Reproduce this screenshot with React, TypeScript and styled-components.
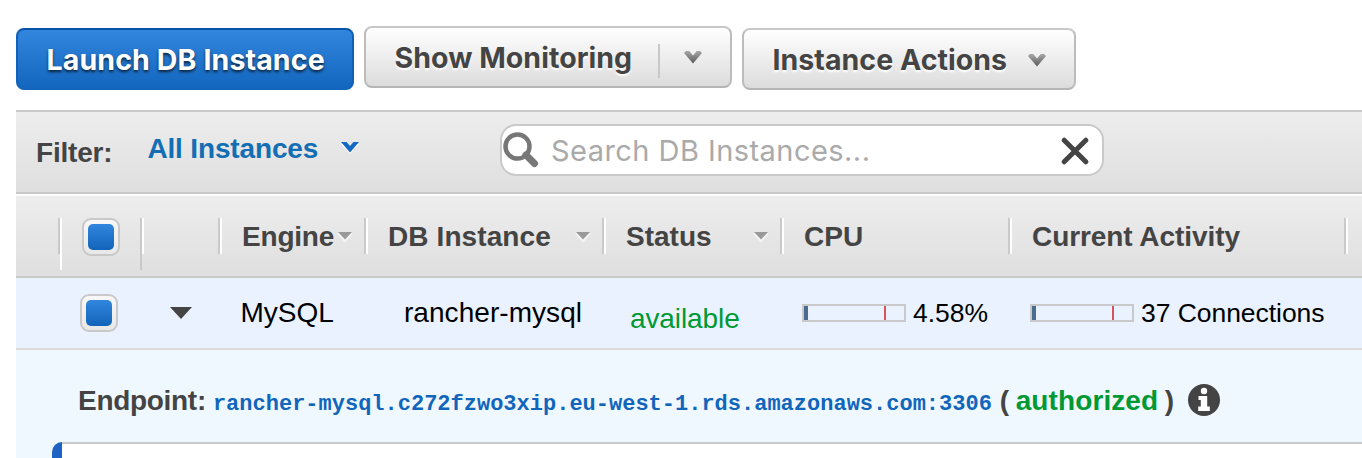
import React from "react";
import styled, { createGlobalStyle } from "styled-components";

const Global = createGlobalStyle`
  * { box-sizing: border-box; }
  body { margin: 0; background: #fff; overflow: hidden; }
`;

const Page = styled.div`
  width: 1362px;
  height: 458px;
  overflow: hidden;
  padding-left: 16px;
  font-family: "Liberation Sans", Arial, sans-serif;
  font-size: 28px;
  color: #444;
`;

const Toolbar = styled.div`
  display: flex;
  gap: 10px;
  height: 110px;
  padding-top: 26px;
`;

const Button = styled.div<{ $width: number; $primary?: boolean; $drop?: number }>`
  display: flex;
  align-items: center;
  width: ${(p) => p.$width}px;
  height: 62px;
  margin-top: ${(p) => p.$drop ?? 0}px;
  padding-left: 28.5px;
  border: 2px solid;
  border-color: ${(p) => (p.$primary ? "#0753a8 #1161b8 #1466bd" : "#c8c8c8 #bcbcbc #b5b5b5")};
  border-radius: 8px;
  background: ${(p) =>
    p.$primary ? "linear-gradient(#3286dd, #1366bd)" : "linear-gradient(#fff, #dcdcdc)"};
  color: ${(p) => (p.$primary ? "#fff" : "#444")};
  text-shadow: ${(p) => (p.$primary ? "0 2px 3px rgba(0,0,0,.7)" : "0 2px 2px #fff")};
`;

const Text = styled.span<{
  $size?: number;
  $bold?: boolean;
  $ui?: boolean;
  $track?: number;
  $color?: string;
  $left?: number;
  $down?: number;
}>`
  font-family: ${(p) => (p.$ui ? 'Inter, "Liberation Sans", sans-serif' : "inherit")};
  font-size: ${(p) => p.$size ?? 28}px;
  font-weight: ${(p) => (p.$bold ? 700 : 400)};
  letter-spacing: ${(p) => p.$track ?? 0}px;
  color: ${(p) => p.$color ?? "inherit"};
  margin-left: ${(p) => p.$left ?? 0}px;
  padding-top: ${(p) => Math.max(0, (p.$down ?? 0) * 2)}px;
  padding-bottom: ${(p) => Math.max(0, -(p.$down ?? 0) * 2)}px;
  line-height: 34px;
  white-space: pre;
`;

const ButtonRule = styled.span`
  width: 2px;
  height: 34px;
  margin: 8px 23px 0 auto;
  background: #c8c8c8;
`;

const ArrowSlot = styled.span<{ $right: number; $auto?: boolean; $top?: number }>`
  display: flex;
  margin-top: ${(p) => p.$top ?? 0}px;
  margin-right: ${(p) => p.$right}px;
  margin-left: ${(p) => (p.$auto ? "auto" : 0)};
`;

const FilterBar = styled.div`
  display: flex;
  align-items: center;
  height: 84px;
  border-top: 2px solid #c9c9c9;
  border-bottom: 2px solid #c9c9c9;
  background: linear-gradient(#ededed, #dfdfdf);
`;

const FilterGroup = styled.div`
  display: flex;
  align-items: center;
  width: 484px;
`;

const FilterSelect = styled.div`
  display: flex;
  align-items: center;
  width: 213px;
  margin-left: 35px;
  padding-bottom: 8px;
`;

const SearchBox = styled.div`
  display: flex;
  align-items: center;
  width: 604px;
  height: 52px;
  margin-bottom: 4px;
  padding-left: 1px;
  border: 2px solid #c9c9c9;
  border-radius: 16px;
  background: #fff;
`;

const columns = "42px 82px 78px 146px 238px 178px 228px 336px 18px";

const HeaderRow = styled.div`
  display: grid;
  grid-template-columns: ${columns};
  height: 84px;
  border-top: 2px solid #fff;
  border-bottom: 2px solid #c9c9c9;
  background: linear-gradient(#ededed, #dfdfdf);
`;

const DataRow = styled.div`
  display: grid;
  grid-template-columns: ${columns};
  height: 72px;
  border-bottom: 2px solid #dcdcdc;
  background: #eaf2ff;
  color: #000;
`;

const Cell = styled.div<{ $pad?: number }>`
  display: flex;
  align-items: center;
  min-width: 0;
  padding-left: ${(p) => p.$pad ?? 0}px;
`;

const Groove = styled.span<{ $dark?: number; $light?: number }>`
  display: flex;
  align-self: flex-start;
  flex: none;
  width: 4px;
  margin-top: 22px;
  &::before, &::after { content: ""; width: 2px; }
  &::before { height: ${(p) => p.$dark ?? 36}px; background: #c9c9c9; }
  &::after { height: ${(p) => p.$light ?? 36}px; background: #fff; }
`;

const Check = styled.span<{ $left: number; $top?: number }>`
  display: flex;
  width: 38px;
  height: 38px;
  margin-left: ${(p) => p.$left}px;
  margin-top: ${(p) => p.$top ?? 0}px;
  padding: 4px;
  border: 2px solid #c9c9c9;
  border-radius: 9px;
  background: linear-gradient(#f8f8f8, #e8e8e8);
  &::after {
    content: "";
    flex: 1;
    border-radius: 5px;
    background: linear-gradient(#3286dd, #1264ba);
  }
`;

const Gauge = styled.span`
  display: flex;
  flex: none;
  justify-content: space-between;
  width: 104px;
  height: 18px;
  padding-right: 18px;
  border: 2px solid #c9c9c9;
  &::before { content: ""; width: 4px; background: #4a6c8e; }
  &::after { content: ""; width: 2px; background: #d9515a; }
`;

const Details = styled.div`
  height: 108px;
  background: #f0f8ff;
`;

const Endpoint = styled.div`
  display: flex;
  align-items: baseline;
  height: 92px;
  padding: 34px 0 0 62px;
`;

const Host = styled.span`
  margin-left: 7px;
  font-family: "Liberation Mono", "Courier New", monospace;
  font-size: 22px;
  font-weight: 700;
  letter-spacing: 0;
  line-height: 34px;
  color: #1166bb;
`;

const InfoSlot = styled.span`
  display: flex;
  align-self: flex-start;
  margin: 0 0 0 14px;
`;

const Panel = styled.div`
  height: 40px;
  margin-left: 36px;
  border-left: 10px solid #1d63c4;
  border-top-left-radius: 10px;
  background: linear-gradient(#c9c9c9 2px, #fff 2px);
`;

const Chevron = ({ blue }: { blue?: boolean }) => (
  <svg width="20" height="14" viewBox="0 0 20 14">
    <defs>
      <linearGradient id="chev" x1="0" y1="0" x2="0" y2="1">
        <stop offset="0" stopColor="#a8a8a8" />
        <stop offset="1" stopColor="#5a5a5a" />
      </linearGradient>
    </defs>
    {blue ? (
      <>
        <path d="M1 3h5l4 4 4-4h5l-9 10z" fill="#fff" />
        <path d="M1 1h5.500L10 5l3.500-4H19l-9 10.500z" fill="#1467c4" />
      </>
    ) : (
      <path d="M1 3 3 1H6.200L10 5.500 13.800 1H17L19 3l-9 10.500z" fill="url(#chev)" />
    )}
  </svg>
);

const Sort = () => (
  <svg width="16" height="12" viewBox="0 0 16 12">
    <path d="M0 2h16L8 12z" fill="#f5f5f5" />
    <path d="M1 1h14L8 8.500z" fill="#999" />
  </svg>
);

const Expand = () => (
  <svg width="24" height="14" viewBox="0 0 24 14">
    <path d="M1 1h22L12 13z" fill="#444" />
  </svg>
);

const Search = () => (
  <svg width="36" height="36" viewBox="0 0 36 36" fill="none" stroke="#777">
    <circle cx="14.500" cy="14.500" r="12" strokeWidth="4.500" />
    <path d="m23 23 8.500 8.500" strokeWidth="7" strokeLinecap="round" />
  </svg>
);

const Clear = () => (
  <svg width="28" height="28" viewBox="0 0 28 28">
    <path d="M3.200 3.200 24.800 24.800M24.800 3.200 3.200 24.800" stroke="#444" strokeWidth="5" strokeLinecap="round" />
  </svg>
);

const Info = () => (
  <svg width="32" height="32" viewBox="0 0 32 32">
    <circle cx="16" cy="16" r="16" fill="#444" />
    <circle cx="16" cy="7" r="3.200" fill="#fff" />
    <path d="M10.500 12H19.200V22.500h2.600V27h-11.600v-4.500h2.600V16h-2.300z" fill="#fff" />
  </svg>
);

export default function App() {
  return (
    <Page>
      <Global />
      <Toolbar>
        <Button $width={338} $primary $drop={2}>
          <Text $ui $bold $size={28.5} $down={1} $track={0.13}>Launch DB Instance</Text>
        </Button>
        <Button $width={368}>
          <Text $ui $bold $size={28.5} $down={1} $track={0.05}>Show Monitoring</Text>
          <ButtonRule />
          <ArrowSlot $right={27}><Chevron /></ArrowSlot>
        </Button>
        <Button $width={334} $drop={2}>
          <Text $ui $bold $size={28.5} $down={1} $track={0.05}>Instance Actions</Text>
          <ArrowSlot $right={27} $auto $top={2}><Chevron /></ArrowSlot>
        </Button>
      </Toolbar>

      <FilterBar>
        <FilterGroup>
          <Text $bold $left={20} $track={-0.2} $down={1}>Filter:</Text>
          <FilterSelect>
            <Text $bold $color="#146eb4" $track={-0.15} $down={1}>All Instances</Text>
            <ArrowSlot $right={0} $auto><Chevron blue /></ArrowSlot>
          </FilterSelect>
        </FilterGroup>
        <SearchBox>
          <Search />
          <Text $ui $left={12} $size={29} $track={0.45} $down={1} $color="#aaa">Search DB Instances...</Text>
          <ArrowSlot $right={13} $auto $top={1}><Clear /></ArrowSlot>
        </SearchBox>
      </FilterBar>

      <HeaderRow>
        <Cell />
        <Cell><Groove $light={52} /><Check $left={20} $top={2} /></Cell>
        <Cell><Groove $dark={52} /></Cell>
        <Cell>
          <Groove /><Text $bold $left={20} $track={-0.2} $down={1}>Engine</Text>
          <ArrowSlot $right={11} $auto $top={2}><Sort /></ArrowSlot>
        </Cell>
        <Cell>
          <Groove /><Text $bold $left={20} $track={0.1} $down={1}>DB Instance</Text>
          <ArrowSlot $right={11} $auto $top={2}><Sort /></ArrowSlot>
        </Cell>
        <Cell>
          <Groove /><Text $bold $left={20} $down={1}>Status</Text>
          <ArrowSlot $right={11} $auto $top={2}><Sort /></ArrowSlot>
        </Cell>
        <Cell><Groove /><Text $bold $left={20} $down={1}>CPU</Text></Cell>
        <Cell><Groove /><Text $bold $left={20} $track={-0.07} $down={1}>Current Activity</Text></Cell>
        <Cell><Groove /></Cell>
      </HeaderRow>

      <DataRow>
        <Cell />
        <Cell><Check $left={22} /></Cell>
        <Cell $pad={29}><Expand /></Cell>
        <Cell $pad={22.5}><Text>MySQL</Text></Cell>
        <Cell $pad={40}><Text $track={0.05}>rancher-mysql</Text></Cell>
        <Cell $pad={28}><Text $color="#009933" $down={6} $track={-0.1}>available</Text></Cell>
        <Cell $pad={22}><Gauge /><Text $left={7} $size={26.5}>4.58%</Text></Cell>
        <Cell $pad={22}><Gauge /><Text $left={7} $size={26.5} $track={-0.05}>37 Connections</Text></Cell>
        <Cell />
      </DataRow>

      <Details>
        <Endpoint>
          <Text $bold $track={-0.3}>Endpoint:</Text>
          <Host>rancher-mysql.c272fzwo3xip.eu-west-1.rds.amazonaws.com:3306</Host>
          <Text $bold $left={8}>(</Text>
          <Text $bold $left={6.5} $track={0.1} $color="#009933">authorized</Text>
          <Text $bold $left={6.5}>)</Text>
          <InfoSlot><Info /></InfoSlot>
        </Endpoint>
        <Panel />
      </Details>
    </Page>
  );
}
